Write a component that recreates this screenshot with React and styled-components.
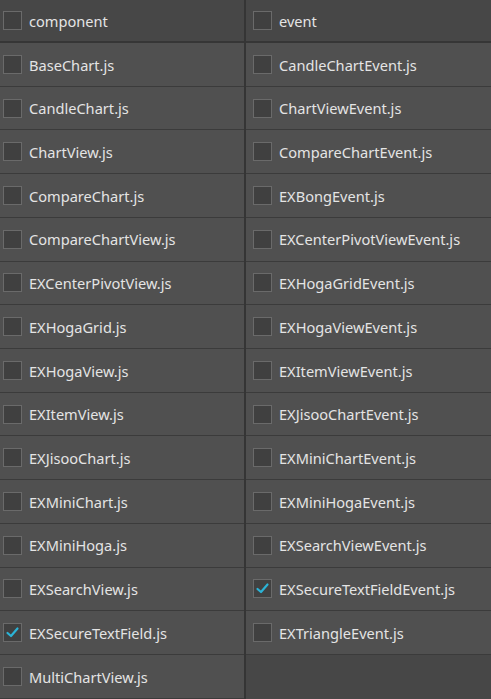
import styled, { createGlobalStyle } from 'styled-components';

const LEFT = {
  title: 'component',
  files: [
    'BaseChart.js', 'CandleChart.js', 'ChartView.js', 'CompareChart.js', 'CompareChartView.js',
    'EXCenterPivotView.js', 'EXHogaGrid.js', 'EXHogaView.js', 'EXItemView.js', 'EXJisooChart.js',
    'EXMiniChart.js', 'EXMiniHoga.js', 'EXSearchView.js', 'EXSecureTextField.js', 'MultiChartView.js',
  ],
  checked: ['EXSecureTextField.js'],
};

const RIGHT = {
  title: 'event',
  files: [
    'CandleChartEvent.js', 'ChartViewEvent.js', 'CompareChartEvent.js', 'EXBongEvent.js',
    'EXCenterPivotViewEvent.js', 'EXHogaGridEvent.js', 'EXHogaViewEvent.js', 'EXItemViewEvent.js',
    'EXJisooChartEvent.js', 'EXMiniChartEvent.js', 'EXMiniHogaEvent.js', 'EXSearchViewEvent.js',
    'EXSecureTextFieldEvent.js', 'EXTriangleEvent.js',
  ],
  checked: ['EXSecureTextFieldEvent.js'],
};

const GlobalStyle = createGlobalStyle`
  html, body {
    margin: 0;
    padding: 0;
    background: #474747;
  }
  body {
    font-family: "Noto Sans", "Noto Sans CJK KR", sans-serif;
  }
`;

const Board = styled.div`
  display: grid;
  grid-template-columns: 244px 1fr;
  column-gap: 2px;
  background: #353535;
  height: 699px;
  overflow: hidden;
`;

const Column = styled.div`
  display: flex;
  flex-direction: column;
  background: #474747;
`;

const Cell = styled.label`
  display: flex;
  align-items: center;
  gap: 7px;
  box-sizing: border-box;
  padding-left: ${({ inset }) => inset}px;
  height: ${({ head }) => (head ? '43px' : '43.73px')};
  background: ${({ head }) => (head ? '#474747' : '#505050')};
  border-bottom: ${({ head }) => (head ? '2px solid #363636' : '1px solid #3b3b3b')};
  color: #e4e4e4;
  font-size: 14.6px;
  white-space: nowrap;
`;

const Box = styled.span`
  flex: none;
  width: 19px;
  height: 19px;
  box-sizing: border-box;
  border: 1px solid #6a6a6a;
  background: #404040;
  display: flex;
  align-items: center;
  justify-content: center;
`;

const Label = styled.span`
  line-height: 1;
  padding-top: 1px;
`;

const Check = () => (
  <svg width="15" height="15" viewBox="0 0 15 15">
    <polyline points="2.5,8 6,11 12.5,3.5" fill="none" stroke="#2bb3d6" strokeWidth="2.2" strokeLinecap="round" strokeLinejoin="round" />
  </svg>
);

const Row = ({ text, head, checked, inset }) => (
  <Cell head={head} inset={inset}>
    <Box>{checked && <Check />}</Box>
    <Label>{text}</Label>
  </Cell>
);

const List = ({ data, inset }) => (
  <Column>
    <Row head text={data.title} inset={inset} />
    {data.files.map((f) => (
      <Row key={f} text={f} inset={inset} checked={data.checked.includes(f)} />
    ))}
  </Column>
);

export default function App() {
  return (
    <>
      <GlobalStyle />
      <Board>
        <List data={LEFT} inset={3} />
        <List data={RIGHT} inset={7} />
      </Board>
    </>
  );
}
